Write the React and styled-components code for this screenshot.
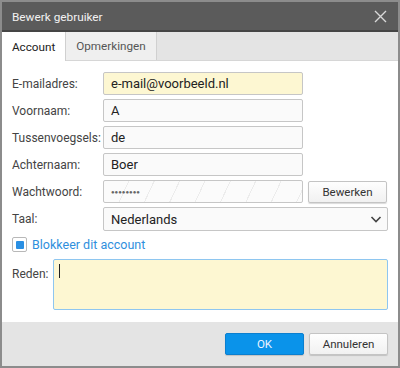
import React from 'react';
import styled, { createGlobalStyle } from 'styled-components';

const GlobalStyle = createGlobalStyle`
  html, body {
    margin: 0;
    padding: 0;
    background: #ffffff;
  }
  body {
    font-family: Roboto, "Noto Sans", sans-serif;
    font-size: 13px;
    color: #333;
  }
`;

const Dialog = styled.div`
  width: 400px;
  height: 368px;
  box-sizing: border-box;
  border: 2px solid #8c8c8c;
  display: flex;
  flex-direction: column;
  background: #fff;
`;

const TitleBar = styled.div`
  box-sizing: border-box;
  height: 30px;
  background: #5b5b5b;
  border-bottom: 2px solid #454545;
  display: flex;
  align-items: center;
  justify-content: space-between;
  padding: 1px 10px 0 10px;
  color: #f2f2f2;
  font-size: 11.8px;
`;

const CloseButton = styled.button`
  background: none;
  border: none;
  padding: 0;
  width: 14px;
  height: 14px;
  display: flex;
  cursor: pointer;
`;

const TabBar = styled.div`
  height: 28px;
  background: #e4e4e4;
  border-bottom: 1px solid #d6d6d6;
  display: flex;
`;

const Tab = styled.div`
  padding: 0 10px;
  display: flex;
  align-items: center;
  font-size: 11.7px;
  color: ${(p) => (p.active ? '#222' : '#555')};
  background: ${(p) => (p.active ? '#fff' : '#efefef')};
  border-right: 1px solid #d0d0d0;
  margin-bottom: ${(p) => (p.active ? '-1px' : '0')};
`;

const Content = styled.div`
  flex: 1;
  padding: 11px 10px 0 10px;
  display: flex;
  flex-direction: column;
`;

const Row = styled.div`
  display: grid;
  grid-template-columns: 86px 200px 79px;
  align-items: center;
  column-gap: 5px;
  margin-bottom: 4px;
  height: 23px;
`;

const Label = styled.label`
  color: #444;
  font-size: 12px;
  white-space: nowrap;
`;

const Input = styled.div`
  box-sizing: border-box;
  height: 23px;
  border: 1px solid #c6c6c6;
  border-radius: 2px;
  background: ${(p) => (p.highlight ? '#fdf7d2' : '#fafafa')};
  padding: 0 7px;
  display: flex;
  align-items: center;
  font-size: 13px;
  color: #222;
`;

const PasswordInput = styled(Input)`
  background: repeating-linear-gradient(
    115deg,
    #fbfbfb 0px,
    #fbfbfb 22px,
    #ececec 22px,
    #ececec 23px
  );
  color: #666;
  letter-spacing: 0;
  font-size: 6px;
`;

const Button = styled.button`
  box-sizing: border-box;
  height: 22px;
  width: 79px;
  border: 1px solid ${(p) => (p.primary ? '#0b7fcf' : '#c4c4c4')};
  border-radius: 2px;
  background: ${(p) => (p.primary ? '#0a93ea' : 'linear-gradient(#fefefe, #f1f1f1)')};
  color: ${(p) => (p.primary ? '#eaf5ff' : '#333')};
  font-family: Roboto, sans-serif;
  font-size: 11.5px;
  box-shadow: 0 1px 1px rgba(0, 0, 0, 0.15);
  padding: 0;
  cursor: pointer;
`;

const SelectRow = styled.div`
  display: grid;
  grid-template-columns: 86px 1fr;
  column-gap: 5px;
  align-items: center;
  height: 24px;
  margin-bottom: 5px;
`;

const Select = styled(Input)`
  height: 24px;
  justify-content: space-between;
  padding-right: 4px;
`;

const CheckRow = styled.div`
  display: flex;
  align-items: center;
  gap: 5px;
  height: 17px;
  margin-bottom: 6px;
`;

const CheckBox = styled.span`
  box-sizing: border-box;
  width: 15px;
  height: 15px;
  border: 1px solid #b8b8b8;
  border-radius: 2px;
  background: #fff;
  display: flex;
  align-items: center;
  justify-content: center;
  &::after {
    content: '';
    width: 8px;
    height: 8px;
    border-radius: 1px;
    background: #2a8fe3;
  }
`;

const CheckLabel = styled.span`
  color: #2f8fdd;
  font-size: 12.5px;
`;

const ReasonRow = styled.div`
  display: flex;
  align-items: flex-start;
  gap: 5px;
`;

const ReasonLabel = styled(Label)`
  padding-top: 8px;
`;

const TextArea = styled.div`
  flex: 1;
  box-sizing: border-box;
  height: 51px;
  border: 1px solid #8ec6f0;
  border-radius: 2px;
  background: #fdf7d2;
  padding: 4px 5px;
`;

const Caret = styled.span`
  display: block;
  width: 1px;
  height: 14px;
  background: #222;
`;

const Footer = styled.div`
  height: 44px;
  background: #e4e4e4;
  display: flex;
  justify-content: flex-end;
  align-items: flex-start;
  gap: 5px;
  padding: 11px 10px 0 0;
  box-sizing: border-box;
`;

function Field({ label, value, highlight }) {
  return (
    <Row>
      <Label>{label}</Label>
      <Input highlight={highlight}>{value}</Input>
    </Row>
  );
}

export default function App() {
  return (
    <>
      <GlobalStyle />
      <Dialog>
        <TitleBar>
          <span>Bewerk gebruiker</span>
          <CloseButton aria-label="Sluiten">
            <svg width="13" height="13" viewBox="0 0 13 13">
              <path d="M1 1L12 12M12 1L1 12" stroke="#d8d8d8" strokeWidth="1.4" />
            </svg>
          </CloseButton>
        </TitleBar>
        <TabBar>
          <Tab active>Account</Tab>
          <Tab>Opmerkingen</Tab>
        </TabBar>
        <Content>
          <Field label="E-mailadres:" value="e-mail@voorbeeld.nl" highlight />
          <Field label="Voornaam:" value="A" />
          <Field label="Tussenvoegsels:" value="de" />
          <Field label="Achternaam:" value="Boer" />
          <Row>
            <Label>Wachtwoord:</Label>
            <PasswordInput>●●●●●●●●</PasswordInput>
            <Button>Bewerken</Button>
          </Row>
          <SelectRow>
            <Label>Taal:</Label>
            <Select>
              <span>Nederlands</span>
              <svg width="14" height="14" viewBox="0 0 14 14">
                <path d="M2.5 5L7 9.5L11.5 5" fill="none" stroke="#444" strokeWidth="1.6" />
              </svg>
            </Select>
          </SelectRow>
          <CheckRow>
            <CheckBox />
            <CheckLabel>Blokkeer dit account</CheckLabel>
          </CheckRow>
          <ReasonRow>
            <ReasonLabel>Reden:</ReasonLabel>
            <TextArea>
              <Caret />
            </TextArea>
          </ReasonRow>
        </Content>
        <Footer>
          <Button primary>OK</Button>
          <Button>Annuleren</Button>
        </Footer>
      </Dialog>
    </>
  );
}
